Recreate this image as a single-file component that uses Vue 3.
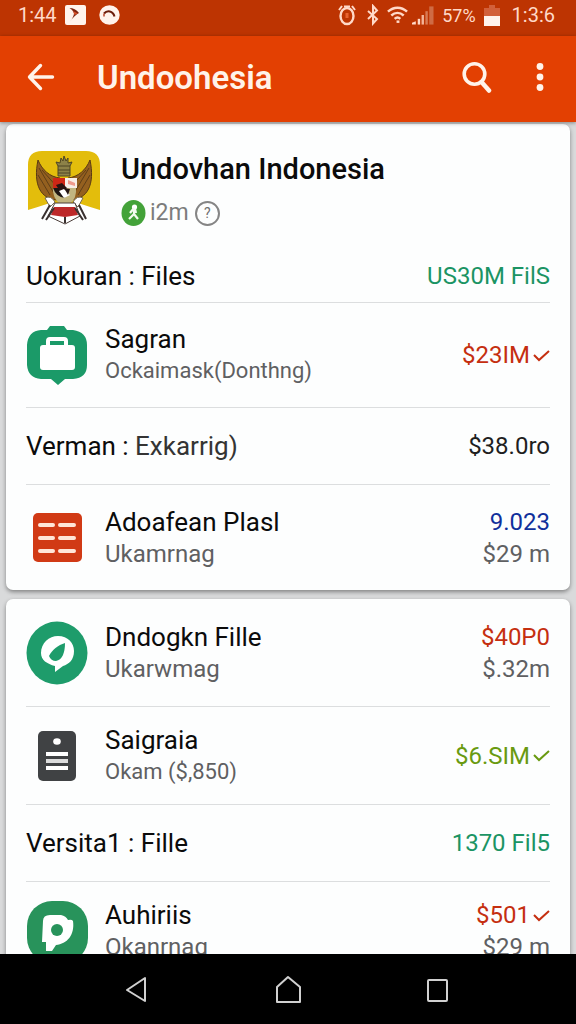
<template>
  <div class="screen">
    <div class="status-bar">
      <div class="status-group">
        <span class="clock">1:44</span>
        <svg class="status-app" width="21" height="20" viewBox="0 0 21 20">
          <rect width="21" height="20" rx="2" fill="#fff3ec" />
          <path d="M4.500 3Q10 3 14 8Q10 10 4.500 17Q9 12 9 8Q8 5 4.500 3Z" fill="#7d2410" />
          <path d="M8 6L13 8.500L9.500 10Z" fill="#d4502a" />
        </svg>
        <svg class="status-chat" width="21" height="20" viewBox="0 0 21 20">
          <ellipse cx="10.500" cy="10" rx="10.200" ry="9.800" fill="#fff3ec" />
          <path d="M5 8.500C8 5 14 5.500 15.500 11.500" fill="none" stroke="#6b1c0a" stroke-width="2" />
          <path d="M5 8.500V11.500" stroke="#b8452a" stroke-width="1.500" />
        </svg>
      </div>
      <div class="status-group right">
        <svg width="20" height="22" viewBox="0 0 20 22" fill="none" stroke="#ffd9c8">
          <ellipse cx="10" cy="12" rx="6.500" ry="8" stroke-width="2.400" />
          <path d="M2 6L5 2M18 6L15 2M7 2.500H13" stroke-width="2" />
          <path d="M10 9V14" stroke="#e8622f" stroke-width="3" />
        </svg>
        <svg class="bluetooth" width="12" height="22" viewBox="0 0 12 22" fill="none" stroke="#ffd9c8" stroke-width="2">
          <path d="M1 7L10 15L6 19.500V2L10 6.500L1 15" />
        </svg>
        <svg class="wifi" width="21" height="20" viewBox="0 0 22 20" fill="none" stroke="#ffd9c8" stroke-width="2.600">
          <path d="M1 6.500C7 1 15 1 21 6.500" />
          <path d="M4.500 10.500C8.500 7 13.500 7 17.500 10.500" />
          <path d="M8 14C10 12.200 12 12.200 14 14" />
          <path d="M10 17H13" />
        </svg>
        <svg class="signal" width="22" height="20" viewBox="0 0 23 20">
          <path d="M0 20V18L4 16.500V20Z" fill="#ffd9c8" />
          <rect x="6" y="14" width="2.500" height="6" fill="#ffd9c8" />
          <rect x="10" y="10" width="2.500" height="10" fill="#f3b497" />
          <rect x="14" y="6" width="2.500" height="14" fill="#d87b55" />
          <rect x="18" y="1" width="4.500" height="19" fill="#cf6b44" />
        </svg>
        <span class="percent">57%</span>
        <svg width="16" height="21" viewBox="0 0 16 21">
          <path d="M0 3H5V0H11V3H16V12H0Z" fill="#d2603a" />
          <rect y="11" width="16" height="10" fill="#fff3ec" />
        </svg>
        <span class="clock-right">1:3:6</span>
      </div>
    </div>

    <header class="app-bar">
      <button class="icon-btn" aria-label="Back">
        <svg width="28" height="28" viewBox="0 0 28 28" fill="none" stroke="#fff3ea" stroke-width="3.400" stroke-linecap="round">
          <path d="M2.500 14H25.500M13.500 2.500L2.500 14L13.500 25.500" stroke-linejoin="round" />
        </svg>
      </button>
      <h1 class="bar-title">Undoohesia</h1>
      <button class="icon-btn" aria-label="Search">
        <svg width="30" height="32" viewBox="0 0 30 32" fill="none" stroke="#fff3ea">
          <circle cx="12.500" cy="13" r="10.300" stroke-width="3.600" />
          <path d="M19.500 21L27 29.500" stroke-width="4.500" stroke-linecap="round" />
        </svg>
      </button>
      <button class="icon-btn more" aria-label="More options">
        <svg width="8" height="30" viewBox="0 0 8 30" fill="#fff3ea">
          <circle cx="4" cy="4.500" r="3.400" />
          <circle cx="4" cy="15" r="3.400" />
          <circle cx="4" cy="25.500" r="3.400" />
        </svg>
      </button>
    </header>

    <main class="content">
      <section v-for="(card, i) in cards" :key="i" class="card">
        <div v-if="card.head" class="head">
          <svg class="emblem" width="72" height="76" viewBox="0 0 72 76">
            <path d="M14 1H58Q72 1 72 15V60Q62 57 50 53H22Q10 57 0 60V15Q0 1 14 1Z" fill="#e3bd0c" />
            <path d="M10 10C5 34 12 50 31 50L32 28C22 27 14 20 10 10Z" fill="#94601f" stroke="#5a3a12" />
            <path d="M62 10C67 34 60 50 41 50L40 28C50 27 58 20 62 10Z" fill="#94601f" stroke="#5a3a12" />
            <path d="M11 18L27 45M10 25L22 45M14 20L30 38M61 18L45 45M62 25L50 45M58 20L42 38" stroke="#5f3e17" fill="none" />
            <path d="M30 26V16L28 12L32 13L33 8L35 11L36 6L38 11L40 8L40 13L44 12L42 16V26Z" fill="#8c8148" stroke="#4d4424" />
            <path d="M30 16H42M30 20H42M30 23H42" stroke="#4d4424" />
            <path d="M25 28H48V42Q47 54 37 55Q27 54 25 42Z" fill="#c2b580" />
            <path d="M25 28H37V38H25Z" fill="#cf2716" />
            <path d="M37 28H49V38H37Z" fill="#f8eee7" />
            <path d="M40 30L47 33V36L40 34Z" fill="#ef9a8c" />
            <path d="M25 38H37V48Q28 47 25 38Z" fill="#1d1513" />
            <path d="M28 35L34 33L39 38L33 43Z" fill="#2b1311" />
            <path d="M31 41L36 39L42 45L36 48Z" fill="#ffffff" />
            <path d="M36 38L42 39L40 45Z" fill="#231413" />
            <path d="M17 48Q23 45 27 52L22 57ZM55 48Q49 45 45 52L50 57Z" fill="#fff" stroke="#756951" />
            <path d="M27 53H47L52 66L37 74L20 66Z" fill="#fff" stroke="#4a3c38" />
            <path d="M26 57H47L50 65L37 67L23 65Z" fill="#bd2829" />
            <path d="M22 55L14 69M26 58L18 70M51 55L58 69M47 58L55 70M37 67V73" stroke="#39302f" stroke-width="2" fill="none" />
          </svg>
          <div class="head-text">
            <h2 class="head-title">Undovhan Indonesia</h2>
            <div class="head-meta">
              <svg width="25" height="26" viewBox="0 0 25 26">
                <ellipse cx="12.500" cy="13" rx="12" ry="13" fill="#43a239" />
                <circle cx="13.500" cy="7" r="2.600" fill="#fff" />
                <path d="M13 8L9 13M13 9V14L8 19M13 14L17 19M14 9L15 13" stroke="#f2fbef" stroke-width="2.200" fill="none" />
              </svg>
              <span>i2m</span>
              <button class="help" aria-label="Help">?</button>
            </div>
          </div>
        </div>
        <ul class="rows">
          <li v-for="row in card.rows" :key="row.title" class="row" :class="row.kind">
            <svg v-if="row.icon === 'bag'" class="row-icon" viewBox="0 0 60 60">
              <path d="M23 1H37L40 5H46Q60 7 60 20V40Q60 53 46 54H38L31 60L24 54H14Q1 53 0 40V20Q1 6 14 5H20Z" fill="#1b9a68" />
              <path d="M21 20V16Q21 14 23 14H37Q39 14 39 16V20" fill="none" stroke="#fff" stroke-width="4" />
              <rect x="13" y="20" width="35" height="25" rx="3" fill="#fff" />
            </svg>
            <svg v-else-if="row.icon === 'table'" class="row-icon" viewBox="0 0 60 60">
              <rect x="6" y="5" width="49" height="49" rx="5" fill="#d13a15" />
              <path d="M13 17H26M33 17H47M13 30H26M33 30H47M13 43H26M33 43H47" stroke="#ffe6d8" stroke-width="4" stroke-linecap="round" />
            </svg>
            <svg v-else-if="row.icon === 'leaf'" class="row-icon" viewBox="0 0 60 60">
              <ellipse cx="30" cy="30" rx="30.500" ry="31.500" fill="#1e9c6b" />
              <path d="M14 30C14 20 22 13 31 13C41 13 47 20 47 28C47 37 42 41 36 43L28 49V43C20 41 14 37 14 30Z" fill="#fff" />
              <path d="M38 20C38 30 35 37 29 38Q24 38 22 33C25 27 31 22 38 20Z" fill="#1e9c6b" />
            </svg>
            <svg v-else-if="row.icon === 'note'" class="row-icon" viewBox="0 0 60 60">
              <rect x="11" y="5" width="38" height="50" rx="5" fill="#404244" />
              <ellipse cx="30" cy="15.500" rx="3.800" ry="3.200" fill="#fff" />
              <rect x="19" y="26" width="22" height="4" fill="#fff" />
              <rect x="19" y="33" width="22" height="4" fill="#dcdcdc" />
              <rect x="19" y="40" width="22" height="4" fill="#fff" />
            </svg>
            <svg v-else-if="row.icon === 'pin'" class="row-icon" viewBox="0 0 60 60">
              <rect width="61" height="62" rx="25" fill="#28935b" />
              <path d="M16 20Q16 14 23 14H34Q39 15 41 19Q45 18 46 20C48 34 40 43 29 44L25 50H19V41L15 41Z" fill="#fff" />
              <circle cx="30" cy="29" r="6" fill="#28935b" />
            </svg>

            <div class="labels">
              <div class="title">{{ row.title }}<span v-if="row.light" class="light">{{ row.light }}</span></div>
              <div v-if="row.sub" class="sub" :class="{ compact: row.compact }">{{ row.sub }}</div>
            </div>
            <div class="values">
              <div class="value" :class="row.color">
                {{ row.value }}
                <svg v-if="row.check" width="17" height="13" viewBox="0 0 17 13" fill="none" stroke="currentColor" stroke-width="2">
                  <path d="M1 6L6 11L16 2" />
                </svg>
              </div>
              <div v-if="row.note" class="sub">{{ row.note }}</div>
            </div>
          </li>
        </ul>
      </section>
    </main>

    <nav class="nav-bar">
      <button class="nav-btn" aria-label="Back">
        <svg width="26" height="28" viewBox="0 0 26 28" fill="none" stroke="#d0d0d0" stroke-width="2">
          <path d="M19 3V26L1 15Z" stroke-linejoin="round" />
        </svg>
      </button>
      <button class="nav-btn" aria-label="Home">
        <svg width="26" height="28" viewBox="0 0 26 28" fill="none" stroke="#d0d0d0" stroke-width="2">
          <path d="M2 12L13 2L25 12V27H2Z" stroke-linejoin="round" />
        </svg>
      </button>
      <button class="nav-btn" aria-label="Recent apps">
        <svg width="26" height="28" viewBox="0 0 26 28" fill="none" stroke="#d0d0d0" stroke-width="2">
          <rect x="4" y="5" width="19" height="21" rx="1" />
        </svg>
      </button>
    </nav>
  </div>
</template>

<script setup>
const cards = [
  {
    head: true,
    rows: [
      { kind: 'summary', title: 'Uokuran : Files', value: 'US30M FilS', color: 'green' },
      { kind: 'item', icon: 'bag', title: 'Sagran', sub: 'Ockaimask(Donthng)', compact: true, value: '$23IM', color: 'red', check: true },
      { kind: 'plain', title: 'Verman : ', light: 'Exkarrig)', value: '$38.0ro', color: 'dark' },
      { kind: 'item', icon: 'table', title: 'Adoafean Plasl', sub: 'Ukamrnag', value: '9.023', color: 'blue', note: '$29 m' }
    ]
  },
  {
    rows: [
      { kind: 'item tall', icon: 'leaf', title: 'Dndogkn Fille', sub: 'Ukarwmag', value: '$40P0', color: 'red', note: '$.32m' },
      { kind: 'item short', icon: 'note', title: 'Saigraia', sub: 'Okam ($,850)', compact: true, value: '$6.SIM', color: 'lime', check: true },
      { kind: 'plain', title: 'Versita1 : Fille', value: '1370 Fil5', color: 'green' },
      { kind: 'item short', icon: 'pin', title: 'Auhiriis', sub: 'Okanrnag', value: '$501', color: 'red', check: true, note: '$29 m' }
    ]
  }
]
</script>

<style>
body {
  margin: 0;
  background: #000;
}
</style>

<style scoped>
.screen {
  display: flex;
  flex-direction: column;
  height: 100vh;
  background: #d9dadb;
  color: #0b0b0b;
  font-family: Roboto, "Liberation Sans", sans-serif;
}

button {
  padding: 0;
  border: none;
  background: transparent;
  font-family: inherit;
  cursor: pointer;
}

svg {
  display: block;
  flex-shrink: 0;
}

.status-bar {
  display: flex;
  flex-shrink: 0;
  align-items: center;
  justify-content: space-between;
  height: 36px;
  padding: 0 21px 6px 18px;
  box-sizing: border-box;
  background: #bd3402;
  color: #ffd9c8;
  font-size: 20px;
}

.status-group {
  display: flex;
  align-items: center;
}

.status-app {
  margin-left: 8px;
}

.status-chat {
  margin-left: 13px;
}

.right {
  gap: 8px;
}

.bluetooth {
  margin-left: 2px;
}

.signal {
  margin-left: -4px;
}

.percent {
  font-size: 18px;
}

.clock-right {
  margin-left: 4px;
}

.app-bar {
  display: flex;
  flex-shrink: 0;
  align-items: center;
  height: 86px;
  padding: 0 32px 4px 27px;
  box-sizing: border-box;
  background: #e34002;
  box-shadow: 0 1px 4px rgba(0, 0, 0, 0.4);
  z-index: 1;
}

.bar-title {
  flex: 1;
  margin: 0 0 0 42px;
  color: #fff3ea;
  font-size: 33px;
  font-weight: 600;
}

.more {
  margin-left: 44px;
}

.content {
  display: flex;
  flex: 1;
  flex-direction: column;
  gap: 9px;
  min-height: 0;
  padding: 2px 6px 0;
  overflow: hidden;
}

.card {
  flex-shrink: 0;
  padding: 0 20px;
  border-radius: 7px;
  background: #fdfefe;
  box-shadow: 0 2px 4px rgba(0, 0, 0, 0.4);
}

.head {
  display: flex;
  gap: 21px;
  padding: 26px 0 24px 2px;
}

.head-text {
  display: flex;
  flex-direction: column;
  gap: 12px;
}

.head-title {
  margin: 0;
  font-size: 29px;
  font-weight: 500;
  line-height: 38px;
}

.head-meta {
  display: flex;
  gap: 4px;
  align-items: center;
  color: #7c7c7c;
  font-size: 23px;
  line-height: 26px;
}

.help {
  width: 25px;
  height: 25px;
  margin-left: 2px;
  border: 2px solid #858585;
  border-radius: 50%;
  color: #6f6f6f;
  font-size: 14px;
  line-height: 20px;
}

.rows {
  margin: 0;
  padding: 0;
  list-style: none;
}

.row {
  display: flex;
  align-items: center;
  box-sizing: border-box;
  border-bottom: 1px solid #dcdedf;
}

.row:last-child {
  border-bottom: none;
}

.summary {
  min-height: 53px;
}

.plain {
  min-height: 77px;
}

.item {
  min-height: 105px;
}

.tall {
  min-height: 108px;
}

.short {
  min-height: 98px;
}

.row-icon {
  width: 60px;
  height: 60px;
  margin: 0 18px 0 1px;
  overflow: visible;
}

.labels {
  flex: 1;
}

.title,
.value {
  font-size: 26px;
  line-height: 32px;
}

.title {
  font-weight: 450;
  white-space: pre;
}

.light {
  color: #343434;
  font-weight: 400;
}

.sub {
  color: #5f6062;
  font-size: 24px;
  line-height: 32px;
}

.compact {
  font-size: 22px;
}

.values {
  text-align: right;
}

.value {
  display: flex;
  gap: 3px;
  align-items: center;
  justify-content: flex-end;
  font-size: 24px;
  font-weight: 450;
}

.green {
  color: #1b9464;
}

.red {
  color: #c52f10;
}

.lime {
  color: #699a10;
}

.blue {
  color: #10309c;
}

.dark {
  color: #1f1f1f;
}

.nav-bar {
  display: flex;
  flex-shrink: 0;
  align-items: center;
  justify-content: center;
  gap: 123px;
  height: 70px;
  background: #000;
}
</style>
